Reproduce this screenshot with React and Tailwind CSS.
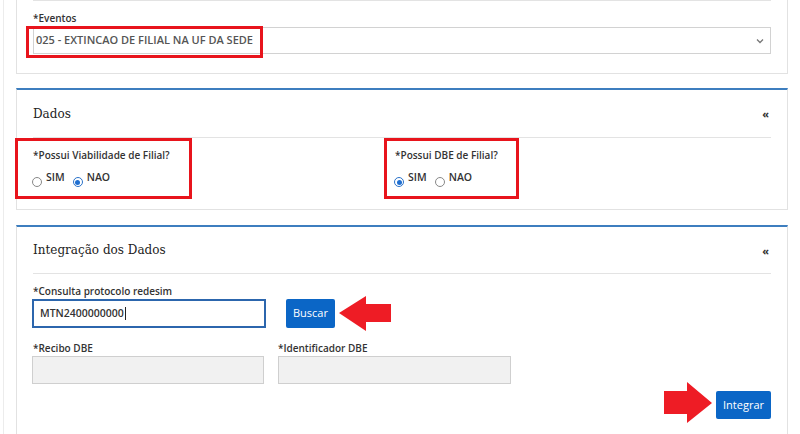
import React from "react";

const labelCls = "block text-[10px] leading-[14px] font-semibold text-[#333] [font-family:'Open_Sans',sans-serif]";

function Radio({ checked, label }) {
  return (
    <span className="flex items-start">
      <span
        className={
          "mt-[7px] w-[10px] h-[10px] rounded-full border flex items-center justify-center bg-white " +
          (checked ? "border-[#2a72c9]" : "border-[#888]")
        }
      >
        {checked && <span className="w-[5px] h-[5px] rounded-full bg-[#1f6fd1]" />}
      </span>
      <span className="ml-[4px] text-[10.5px] leading-[14px] font-semibold text-[#333]">{label}</span>
    </span>
  );
}

function CardHeader({ title, h }) {
  return (
    <div className={"flex items-center justify-between border-b border-[#e3e3e3] " + h}>
      <span className="text-[12px] text-[#222] [font-family:'DejaVu_Serif',serif]">{title}</span>
      <span className="mr-[2px] text-[11px] font-bold text-[#333] leading-none">«</span>
    </div>
  );
}

function RedBox({ cls }) {
  return <div className={"absolute border-[3px] border-[#e8141c] pointer-events-none " + cls} />;
}

export default function App() {
  return (
    <div className="relative w-[800px] h-[434px] overflow-hidden bg-white [font-family:'Open_Sans',sans-serif]">
      <div className="absolute left-[3px] top-0 bottom-0 w-px bg-[#ececec]" />
      <div className="pl-[16px] w-[788px] flex flex-col">
        {/* Card 1 */}
        <div className="border-x border-b border-[#e2e2e2] bg-white px-[16px]">
          <div className="border-t border-[#e3e3e3] pt-[10px] pb-[19px]">
            <label className={labelCls}>*Eventos</label>
            <div className="mt-[2px] h-[27px] border border-[#d2d2d2] flex items-center justify-between pl-[2px] pr-[6px]">
              <span className="text-[11px] font-semibold text-[#555]">025 - EXTINCAO DE FILIAL NA UF DA SEDE</span>
              <svg width="8" height="6" viewBox="0 0 8 6">
                <path d="M1 1.5 L4 4.5 L7 1.5" fill="none" stroke="#777" strokeWidth="1.3" />
              </svg>
            </div>
          </div>
        </div>

        {/* Card 2 */}
        <div className="mt-[14px] border-t-2 border-t-[#3d7ebf] border-x border-b border-[#e2e2e2] px-[16px]">
          <CardHeader title="Dados" h="h-[48px]" />
          <div className="flex pt-[10px] pb-[22px]">
            <div className="w-[362px]">
              <label className={labelCls}>*Possui Viabilidade de Filial?</label>
              <div className="mt-[8px] flex items-start gap-[8px] -ml-[1px]">
                <Radio label="SIM" />
                <Radio checked label="NAO" />
              </div>
            </div>
            <div>
              <label className={labelCls}>*Possui DBE de Filial?</label>
              <div className="mt-[8px] flex items-start gap-[8px] -ml-[1px]">
                <Radio checked label="SIM" />
                <Radio label="NAO" />
              </div>
            </div>
          </div>
        </div>

        {/* Card 3 */}
        <div className="mt-[15px] border-t-2 border-t-[#3d7ebf] border-x border-[#e2e2e2] px-[16px] pb-[40px]">
          <CardHeader title="Integração dos Dados" h="h-[47px]" />
          <div className="pt-[10px]">
            <label className={labelCls}>*Consulta protocolo redesim</label>
            <div className="mt-[1px] flex items-center">
              <div className="-ml-[1px] w-[234px] h-[29px] border-2 border-[#2c66ad] flex items-center pl-[6px]">
                <span className="text-[10.5px] font-semibold text-[#333]">MTN2400000000</span>
                <span className="ml-[1px] w-px h-[13px] bg-[#222]" />
              </div>
              <button className="ml-[20px] h-[29px] w-[49px] rounded-[2px] bg-[#0b66c6] text-white text-[11px]">Buscar</button>
            </div>
            <div className="mt-[13px] flex">
              <div className="w-[245px]">
                <label className={labelCls}>*Recibo DBE</label>
                <div className="mt-[1px] -ml-[1px] w-[232px] h-[28px] bg-[#f1f1f1] border border-[#cfcfcf]" />
              </div>
              <div>
                <label className={labelCls}>*Identificador DBE</label>
                <div className="mt-[1px] w-[233px] h-[28px] bg-[#f1f1f1] border border-[#cfcfcf]" />
              </div>
            </div>
            <div className="mt-[7px] flex justify-end">
              <button className="h-[28px] w-[55px] rounded-[2px] bg-[#0b66c6] text-white text-[11px]">Integrar</button>
            </div>
          </div>
        </div>
      </div>

      {/* Overlays */}
      <RedBox cls="left-[26px] top-[26px] w-[237px] h-[32px]" />
      <RedBox cls="left-[15px] top-[138px] w-[177px] h-[61px]" />
      <RedBox cls="left-[384px] top-[138px] w-[135px] h-[61px]" />
      <svg className="absolute left-[339px] top-[296px]" width="52" height="35" viewBox="0 0 52 35">
        <polygon points="0,17 27,0 27,8 52,8 52,26 27,26 27,35" fill="#ee1c25" />
      </svg>
      <svg className="absolute left-[664px] top-[382px]" width="49" height="41" viewBox="0 0 49 41">
        <polygon points="0,9 23,9 23,0 48,21 23,41 23,32 0,32" fill="#ee1c25" />
      </svg>
    </div>
  );
}
